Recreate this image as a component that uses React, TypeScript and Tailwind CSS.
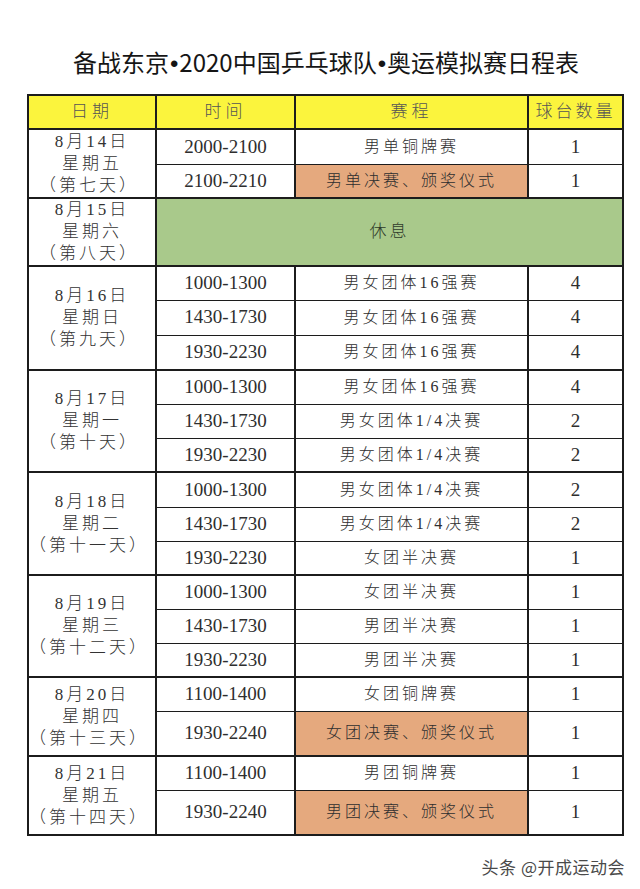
type Row = { time: string; event: string; tables: number; final?: boolean; h: number };
type Block = { date: string; week: string; day: string; rest?: boolean; h?: number; rows: Row[] };

const blocks: Block[] = [
  {
    date: "8月14日", week: "星期五", day: "（第七天）",
    rows: [
      { time: "2000-2100", event: "男单铜牌赛", tables: 1, h: 35 },
      { time: "2100-2210", event: "男单决赛、颁奖仪式", tables: 1, final: true, h: 34 },
    ],
  },
  { date: "8月15日", week: "星期六", day: "（第八天）", rest: true, h: 66, rows: [] },
  {
    date: "8月16日", week: "星期日", day: "（第九天）",
    rows: [
      { time: "1000-1300", event: "男女团体16强赛", tables: 4, h: 34 },
      { time: "1430-1730", event: "男女团体16强赛", tables: 4, h: 35 },
      { time: "1930-2230", event: "男女团体16强赛", tables: 4, h: 35 },
    ],
  },
  {
    date: "8月17日", week: "星期一", day: "（第十天）",
    rows: [
      { time: "1000-1300", event: "男女团体16强赛", tables: 4, h: 34 },
      { time: "1430-1730", event: "男女团体1/4决赛", tables: 2, h: 34 },
      { time: "1930-2230", event: "男女团体1/4决赛", tables: 2, h: 34 },
    ],
  },
  {
    date: "8月18日", week: "星期二", day: "（第十一天）",
    rows: [
      { time: "1000-1300", event: "男女团体1/4决赛", tables: 2, h: 35 },
      { time: "1430-1730", event: "男女团体1/4决赛", tables: 2, h: 34 },
      { time: "1930-2230", event: "女团半决赛", tables: 1, h: 34 },
    ],
  },
  {
    date: "8月19日", week: "星期三", day: "（第十二天）",
    rows: [
      { time: "1000-1300", event: "女团半决赛", tables: 1, h: 34 },
      { time: "1430-1730", event: "男团半决赛", tables: 1, h: 34 },
      { time: "1930-2230", event: "男团半决赛", tables: 1, h: 34 },
    ],
  },
  {
    date: "8月20日", week: "星期四", day: "（第十三天）",
    rows: [
      { time: "1100-1400", event: "女团铜牌赛", tables: 1, h: 34 },
      { time: "1930-2240", event: "女团决赛、颁奖仪式", tables: 1, final: true, h: 45 },
    ],
  },
  {
    date: "8月21日", week: "星期五", day: "（第十四天）",
    rows: [
      { time: "1100-1400", event: "男团铜牌赛", tables: 1, h: 34 },
      { time: "1930-2240", event: "男团决赛、颁奖仪式", tables: 1, final: true, h: 45 },
    ],
  },
];

const cell = "border border-[#1c1c1c] text-center align-middle p-0";

function DateCell({ b, span }: { b: Block; span: number }) {
  return (
    <td rowSpan={span} className={`${cell} border-t-2 border-b-2 border-r-2 bg-white`}>
      <div className="flex flex-col items-center leading-[22px] text-[17px] tracking-[3px] text-[#333]">
        <span>{b.date}</span>
        <span>{b.week}</span>
        <span className="-ml-[6px]">{b.day}</span>
      </div>
    </td>
  );
}

// small latin bullet between title parts
const Dot = () => <span className="font-['Liberation_Sans',sans-serif] mx-[1px]">•</span>;

export default function App() {
  return (
    <div className="w-[640px] h-[889px] bg-white relative font-['Liberation_Serif','Noto_Sans_CJK_SC',serif]">
      <div className="h-[94px] pt-[44px] flex justify-center">
        <h1 className="text-[24px] leading-[36px] h-[36px] text-[#151515] font-['Noto_Sans_CJK_SC',sans-serif] pl-[12px]">
          备战东京<Dot />2020中国乒乓球队<Dot />奥运模拟赛日程表
        </h1>
      </div>

      <div className="pl-[27px]">
        <table className="table-fixed border-collapse w-[595px] border-2 border-[#1c1c1c] font-light">
          <colgroup>
            <col className="w-[128px]" />
            <col className="w-[139px]" />
            <col className="w-[233px]" />
            <col className="w-[95px]" />
          </colgroup>
          <thead>
            <tr className="h-[34px] bg-[#fbf43d] text-[17px] text-[#555] tracking-[4px]">
              <th className={`${cell} border-2 font-light`}>日期</th>
              <th className={`${cell} border-2 font-light`}>时间</th>
              <th className={`${cell} border-2 font-light`}>赛程</th>
              <th className={`${cell} border-2 font-light tracking-[3px]`}>球台数量</th>
            </tr>
          </thead>
          <tbody className="text-[#2e2e2e]">
            {blocks.map((b) =>
              b.rest ? (
                <tr key={b.date} style={{ height: b.h }}>
                  <DateCell b={b} span={1} />
                  <td colSpan={3} className={`${cell} border-2 bg-[#a9c98b] text-[17px] tracking-[3px] text-[#2f3b2a]`}>
                    休息
                  </td>
                </tr>
              ) : (
                b.rows.map((r, i) => (
                  <tr key={b.date + i} style={{ height: r.h }}>
                    {i === 0 && <DateCell b={b} span={b.rows.length} />}
                    <td className={`${cell} border-r-2 text-[19px] ${i === 0 ? "border-t-2" : ""} ${i === b.rows.length - 1 ? "border-b-2" : ""}`}>
                      {r.time}
                    </td>
                    <td className={`${cell} border-r-2 text-[16px] tracking-[3px] ${r.final ? "bg-[#e5a97e]" : "bg-white"} ${i === 0 ? "border-t-2" : ""} ${i === b.rows.length - 1 ? "border-b-2" : ""}`}>
                      {r.event}
                    </td>
                    <td className={`${cell} border-r-2 text-[19px] ${i === 0 ? "border-t-2" : ""} ${i === b.rows.length - 1 ? "border-b-2" : ""}`}>
                      {r.tables}
                    </td>
                  </tr>
                ))
              )
            )}
          </tbody>
        </table>
      </div>

      <div className="flex justify-end pr-[15px] pt-[18px]">
        <span className="text-[17px] text-[#4a4a4a] font-['Noto_Sans_CJK_SC',sans-serif] tracking-[0.5px] [text-shadow:0_0_2px_#fff]">
          头条 @开成运动会
        </span>
      </div>
    </div>
  );
}
